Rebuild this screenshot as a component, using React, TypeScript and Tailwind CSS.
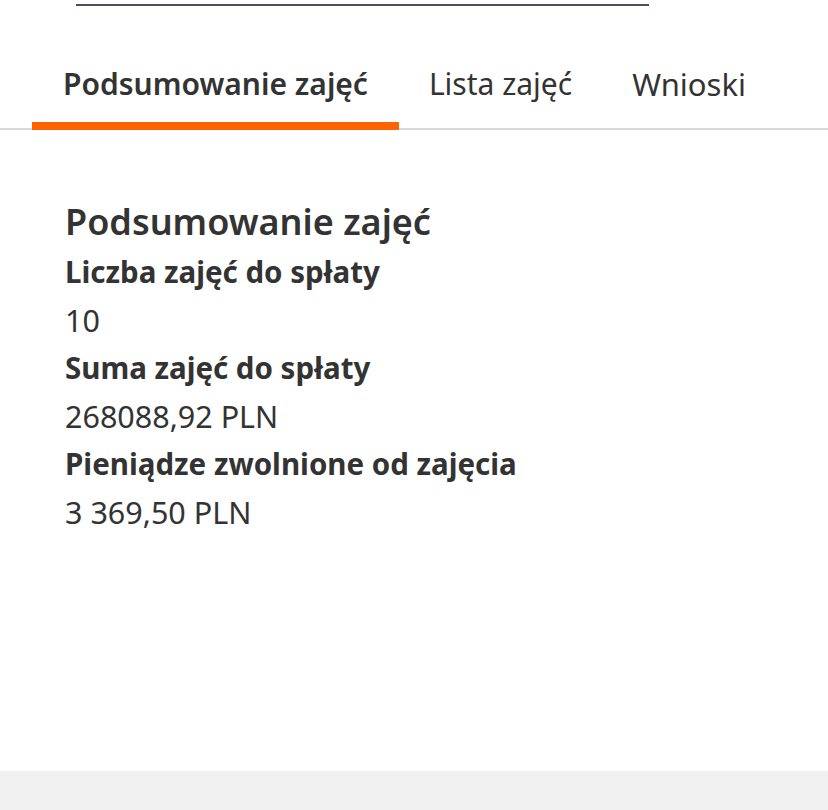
export default function App() {
  const rows = [
    { label: "Liczba zajęć do spłaty", value: "10" },
    { label: "Suma zajęć do spłaty", value: "268088,92 PLN" },
    { label: "Pieniądze zwolnione od zajęcia", value: "3 369,50 PLN" },
  ];

  return (
    <div
      className="w-[828px] h-[810px] bg-white flex flex-col text-[#333333] overflow-hidden"
      style={{ fontFamily: "'Noto Sans', sans-serif" }}
    >
      {/* Cut-off link above the tabs */}
      <div className="h-[6px] flex items-end pl-[76px]">
        <div className="w-[573px] h-[2px] bg-[#4f4d66]" />
      </div>

      {/* Tabs */}
      <div className="relative mt-[36px] flex items-end h-[88px] pl-[32px]">
        <div className="absolute left-0 right-0 bottom-0 h-[2px] bg-[#d9d9d9]" />
        <button className="relative h-full px-[31px] flex items-start pt-[20px] text-[30px] font-semibold leading-[44px] text-[#333333]">
          Podsumowanie zajęć
          <span className="absolute left-0 right-0 bottom-0 h-[8px] bg-[#ff6200]" />
        </button>
        <button className="relative h-full px-[30px] flex items-start pt-[20px] text-[30px] font-normal leading-[44px]">
          Lista zajęć
        </button>
        <button className="relative h-full px-[30px] flex items-start pt-[20px] text-[31px] font-normal leading-[44px]">
          Wnioski
        </button>
      </div>

      {/* Summary */}
      <div className="pl-[65px] pt-[68px] flex flex-col">
        <h2 className="text-[36px] font-semibold leading-[48px] mb-[2px]">
          Podsumowanie zajęć
        </h2>
        {rows.map((r) => (
          <div key={r.label} className="flex flex-col">
            <div className="text-[29.5px] font-bold leading-[48px]">{r.label}</div>
            <div className="text-[30.5px] leading-[48px]">{r.value}</div>
          </div>
        ))}
      </div>

      <div className="mt-auto h-[39px] bg-[#f0f0f0]" />
    </div>
  );
}
